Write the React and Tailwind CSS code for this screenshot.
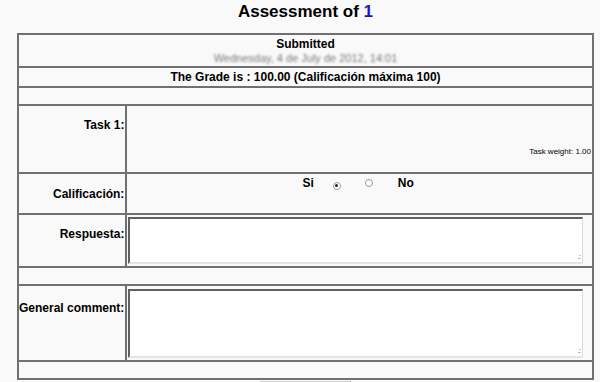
const cell = 'border-2 border-[#707070]';

const Radio = ({ checked }) => (
  <span className="inline-flex w-[8px] h-[8px] rounded-full border border-[#9a9a9a] bg-white items-center justify-center">
    {checked && <span className="w-[3px] h-[3px] rounded-full bg-[#222]" />}
  </span>
);

const Box = ({ h }) => (
  <div
    className={`relative mx-[1px] border-t-2 border-l-2 border-r border-b-2 border-t-[#606060] border-l-[#606060] border-r-[#dcdcdc] border-b-[#e4e4e4] bg-white ${h}`}
  >
    <span className="absolute right-[2px] bottom-[2px] text-[7px] leading-none text-[#999] tracking-[-1px]">.:</span>
  </div>
);

export default function App() {
  return (
    <div
      className="w-[600px] h-[382px] overflow-hidden bg-[#f9f9f9] text-black"
      style={{ fontFamily: '"Liberation Sans", Arial, sans-serif' }}
    >
      <div className="ml-[17px] w-[577px]">
        <h2 className="text-[17px] font-bold text-center leading-[22px] pt-[1px] h-[33px]">
          Assessment of <span className="text-[#1515c8]">1</span>
        </h2>
        <table className="w-full border-collapse text-[12px] font-bold">
          <tbody>
            <tr className="h-[33px]">
              <td colSpan={2} className={`${cell} text-center leading-[14px]`}>
                <div>Submitted</div>
                <div className="text-[11px] font-normal text-[#7a7a7a] blur-[1px]">
                  Wednesday, 4 de July de 2012, 14:01
                </div>
              </td>
            </tr>
            <tr className="h-[19px]">
              <td colSpan={2} className={`${cell} text-center`}>
                The Grade is : 100.00 (Calificación máxima 100)
              </td>
            </tr>
            <tr className="h-[18px]">
              <td colSpan={2} className={cell}></td>
            </tr>
            <tr className="h-[68px]">
              <td className={`${cell} w-[108px] text-right align-top pt-[10px] pr-[1px]`}>Task 1:</td>
              <td className={`${cell} align-bottom text-right pb-[13px] pr-[1px]`}>
                <span className="text-[8px] font-normal">Task weight: 1.00</span>
              </td>
            </tr>
            <tr className="h-[41px]">
              <td className={`${cell} text-right align-top pt-[11px] pr-[1px]`}>Calificación:</td>
              <td className={`${cell} align-top pt-0`}>
                <div className="flex items-center pl-[175px]">
                  <span>Si</span>
                  <span className="ml-[19px]"><Radio checked /></span>
                  <span className="ml-[24px]"><Radio /></span>
                  <span className="ml-[25px]">No</span>
                </div>
              </td>
            </tr>
            <tr className="h-[53px]">
              <td className={`${cell} text-right align-top pt-[10px] pr-[1px]`}>Respuesta:</td>
              <td className={`${cell} pt-[1px] pr-[8px] pb-[1px]`}>
                <Box h="h-[47px]" />
              </td>
            </tr>
            <tr className="h-[18px]">
              <td colSpan={2} className={cell}></td>
            </tr>
            <tr className="h-[76px]">
              <td className={`${cell} text-right align-top pt-[13px] pr-[1px] whitespace-nowrap`}>General comment:</td>
              <td className={`${cell} pt-[1px] pr-[8px] pb-[1px]`}>
                <Box h="h-[69px]" />
              </td>
            </tr>
            <tr className="h-[18px]">
              <td colSpan={2} className={cell}></td>
            </tr>
          </tbody>
        </table>
        <div className="ml-[243px] mt-[1px] w-[91px] h-[10px] bg-[#e6e6e6] border-t border-[#d0d0d0] border-r border-r-[#888]" />
      </div>
    </div>
  );
}
